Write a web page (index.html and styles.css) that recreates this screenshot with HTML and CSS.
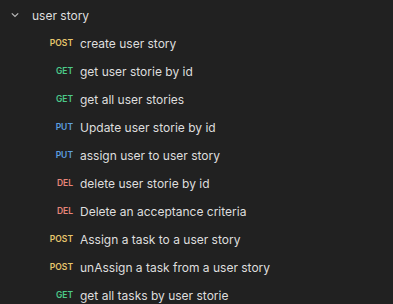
FILE: index.html
```html
<!DOCTYPE html>
<html>
<head>
<meta charset="utf-8">
<link rel="stylesheet" href="styles.css">
</head>
<body>
<div class="tree">
  <div class="folder">
    <span class="chev"><svg width="10" height="10" viewBox="0 0 10 10"><path d="M1.8 3.3 L5 6.5 L8.2 3.3" fill="none" stroke="#b8b8b8" stroke-width="1.2"/></svg></span>
    <span class="name">user story</span>
  </div>
  <div class="req"><span class="m post">POST</span><span class="t">create user story</span></div>
  <div class="req"><span class="m get">GET</span><span class="t">get user storie by id</span></div>
  <div class="req"><span class="m get">GET</span><span class="t">get all user stories</span></div>
  <div class="req"><span class="m put">PUT</span><span class="t">Update user storie by id</span></div>
  <div class="req"><span class="m put">PUT</span><span class="t">assign user to user story</span></div>
  <div class="req"><span class="m del">DEL</span><span class="t">delete user storie by id</span></div>
  <div class="req"><span class="m del">DEL</span><span class="t">Delete an acceptance criteria</span></div>
  <div class="req"><span class="m post">POST</span><span class="t">Assign a task to a user story</span></div>
  <div class="req"><span class="m post">POST</span><span class="t">unAssign a task from a user story</span></div>
  <div class="req"><span class="m get">GET</span><span class="t">get all tasks by user storie</span></div>
</div>
</body>
</html>
```
FILE: styles.css
```css
html, body {
  margin: 0;
  padding: 0;
  background: #212121;
  height: 100%;
  overflow: hidden;
}
.tree {
  padding-top: 1px;
  font-family: Inter, "Noto Sans", sans-serif;
  color: #dedede;
}
.folder, .req {
  height: 28px;
  display: flex;
  align-items: center;
}
.folder {
  padding-left: 10px;
}
.chev {
  width: 10px;
  height: 10px;
  display: flex;
  margin-right: 12px;
}
.name {
  font-size: 12px;
}
.req {
  padding-left: 36px;
}
.m {
  width: 37px;
  text-align: right;
  font-size: 8.5px;
  font-weight: 600;
  margin-right: 7px;
}
.t {
  font-size: 12px;
}
.post { color: #e7c76d; }
.get { color: #4cc98a; }
.put { color: #5d9fe0; }
.del { color: #e8867a; }
```
